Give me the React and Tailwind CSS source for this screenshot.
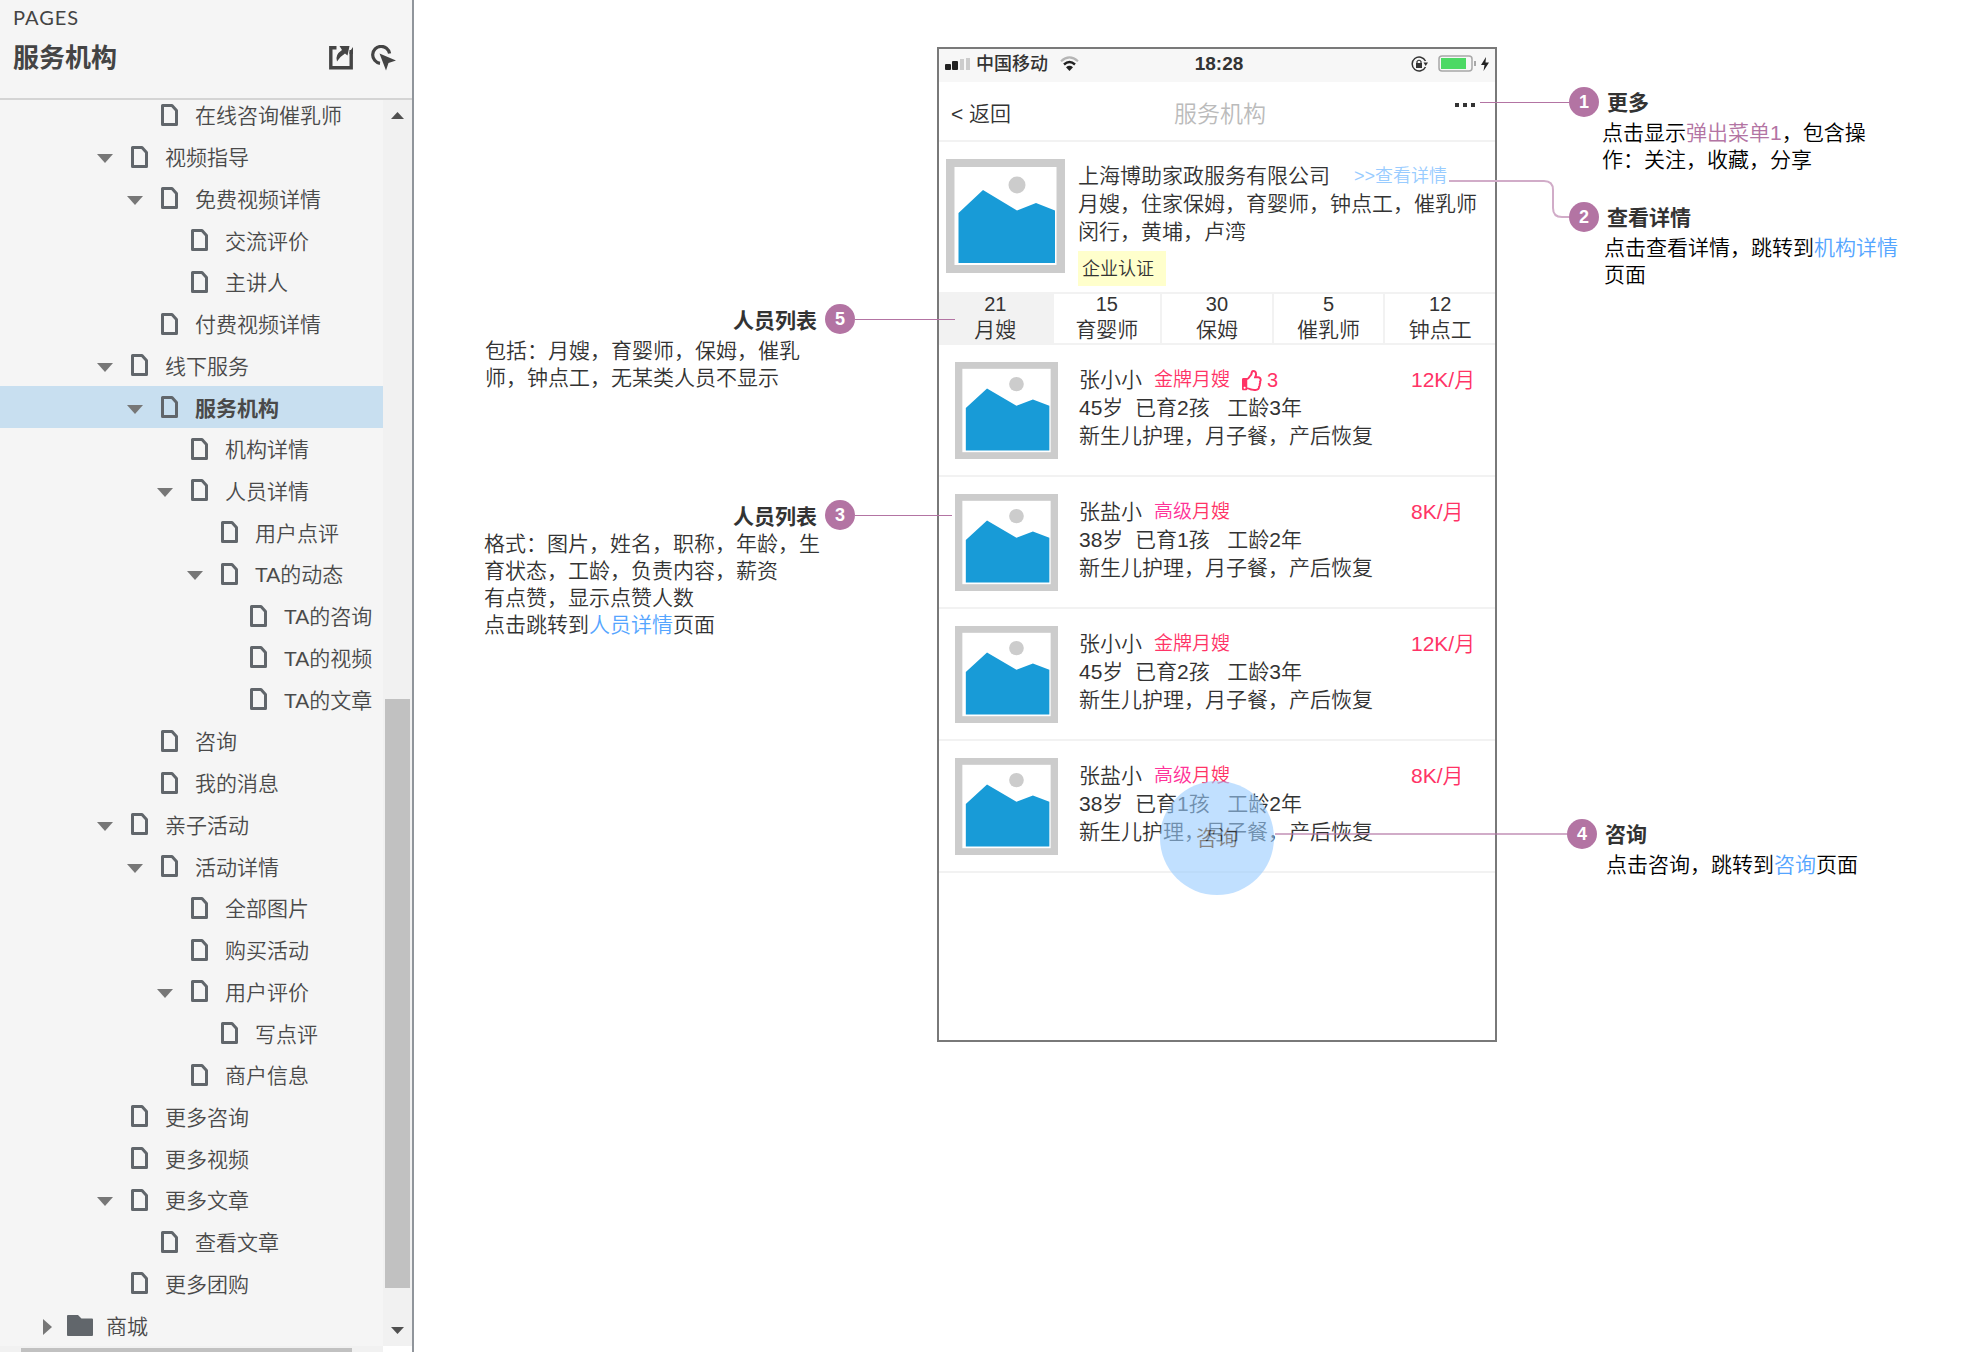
import React from 'react';
import {FaRegThumbsUp} from 'react-icons/fa';

const PAGES = [
    {label: '在线咨询催乳师', level: 3},
    {label: '视频指导', level: 2, open: true},
    {label: '免费视频详情', level: 3, open: true},
    {label: '交流评价', level: 4},
    {label: '主讲人', level: 4},
    {label: '付费视频详情', level: 3},
    {label: '线下服务', level: 2, open: true},
    {label: '服务机构', level: 3, open: true, selected: true},
    {label: '机构详情', level: 4},
    {label: '人员详情', level: 4, open: true},
    {label: '用户点评', level: 5},
    {label: 'TA的动态', level: 5, open: true},
    {label: 'TA的咨询', level: 6},
    {label: 'TA的视频', level: 6},
    {label: 'TA的文章', level: 6},
    {label: '咨询', level: 3},
    {label: '我的消息', level: 3},
    {label: '亲子活动', level: 2, open: true},
    {label: '活动详情', level: 3, open: true},
    {label: '全部图片', level: 4},
    {label: '购买活动', level: 4},
    {label: '用户评价', level: 4, open: true},
    {label: '写点评', level: 5},
    {label: '商户信息', level: 4},
    {label: '更多咨询', level: 2},
    {label: '更多视频', level: 2},
    {label: '更多文章', level: 2, open: true},
    {label: '查看文章', level: 3},
    {label: '更多团购', level: 2},
    {label: '商城', level: 0, folder: true},
];

const INDENT = {
    0: 'pl-[39px]',
    2: 'pl-[97px]',
    3: 'pl-[127px]',
    4: 'pl-[157px]',
    5: 'pl-[187px]',
    6: 'pl-[216px]',
};

const TABS = [
    {count: 21, label: '月嫂', active: true},
    {count: 15, label: '育婴师'},
    {count: 30, label: '保姆'},
    {count: 5, label: '催乳师'},
    {count: 12, label: '钟点工'},
];

const STAFF = [
    {name: '张小小', rank: '金牌', age: 45, kids: 2, years: 3, salary: '12K/月', likes: 3},
    {name: '张盐小', rank: '高级', age: 38, kids: 1, years: 2, salary: '8K/月'},
    {name: '张小小', rank: '金牌', age: 45, kids: 2, years: 3, salary: '12K/月'},
    {name: '张盐小', rank: '高级', age: 38, kids: 1, years: 2, salary: '8K/月'},
];

function PageIcon() {
    return (<svg className="w-[17px] h-[22px]" viewBox="0 0 17 22" fill="none">
        <path d="M1.5 1.5H11L15.5 6.5V20.5H1.5Z" stroke="#61666b" strokeWidth="3" strokeLinejoin="round"/>
    </svg>);
}

function FolderIcon() {
    return (<svg className="w-[26px] h-[21px]" viewBox="0 0 26 21">
        <path d="M1 0H11L14.500 3.500H25Q26 3.500 26 4.500V20Q26 21 25 21H1Q0 21 0 20V1Q0 0 1 0Z" fill="#61666b"/>
    </svg>);
}

function TreeRow({page}) {
    return (<li className={`flex min-h-0 flex-1 items-center ${INDENT[page.level]} ${page.selected ? 'bg-[#c8dff0]' : ''}`}>
        <span className={`flex shrink-0 pt-1 ${page.folder ? 'w-7 pl-1' : 'w-[34px]'}`}>
            {page.open && <svg className="w-4 h-[9px]" viewBox="0 0 16 9"><path d="M0 0H16L8 9Z" fill="#777"/></svg>}
            {page.folder && <svg className="w-[9px] h-4" viewBox="0 0 9 16"><path d="M0 0V16L9 8Z" fill="#777"/></svg>}
        </span>
        {page.folder ? <FolderIcon/> : <PageIcon/>}
        <a
            href="#"
            className={`whitespace-nowrap pt-0.5 text-[21px] leading-none text-[#4a4a4a] ${page.folder ? 'ml-[13px]' : 'ml-[17px]'} ${page.selected ? 'font-bold' : ''}`}
        >
            {page.label}
        </a>
    </li>);
}

function Sidebar() {
    return (<aside
        className="flex h-full w-[414px] shrink-0 flex-col border-r-2 border-[#90959b] bg-[#f5f5f5]">
        <header className="relative z-10 h-[100px] shrink-0 border-b-2 border-[#d4d4d4] bg-[#f5f5f5] pl-[13px] pr-4 pt-[5px] text-[#444]">
            <p className="font-['Lato',sans-serif] text-[20px] font-normal leading-6 tracking-wider">PAGES</p>
            <div className="mt-[11px] flex items-center">
                <h1 className="flex-1 text-[26px] font-bold leading-9">服务机构</h1>
                <button aria-label="Share" className="mr-[18px]">
                    <svg className="w-6 h-6" viewBox="0 0 24 24" fill="none">
                        <path d="M7.500 1.800H1.800V21.700H22.200V4" stroke="#444" strokeWidth="3.400"/>
                        <path d="M10.500 0H20.500L18.500 9.500L16 7.500Q11 10.500 8 15.500Q5.500 9 13 4Z" fill="#444"/>
                        <path d="M24 1L20.500 6V8H24Z" fill="#444"/>
                    </svg>
                </button>
                <button aria-label="Toggle hotspots">
                    <svg className="w-[25px] h-[26px]" viewBox="0 0 25 26" fill="none">
                        <path d="M9 18.300A8.500 8.500 0 1 1 18.600 8.500" stroke="#444" strokeWidth="3.200"/>
                        <path d="M8.500 8.500L25 15.500L17.500 18L15 25.500Z" fill="#444"/>
                    </svg>
                </button>
            </div>
        </header>
        <div className="flex min-h-0 flex-1">
            <div className="flex min-w-0 flex-1 flex-col">
                {/* list is scrolled a few pixels under the header */}
                <ul className="-mt-1.5 flex min-h-0 flex-1 flex-col">
                    {PAGES.map((page, i) => <TreeRow key={i} page={page}/>)}
                </ul>
                <div className="h-1.5 bg-[#f1f1f1] pl-[21px] pr-[31px] pt-0.5">
                    <div className="h-1 bg-[#c1c1c1]"/>
                </div>
            </div>
            <div className="flex w-[29px] flex-col items-center border-b-[6px] border-white bg-[#f1f1f1] pb-3 pt-3">
                <svg className="w-[13px] h-[7px]" viewBox="0 0 13 7"><path d="M0 7H13L6.500 0Z" fill="#505050"/></svg>
                <div className="grow-[580]"/>
                <div className="w-[25px] grow-[589] bg-[#c1c1c1]"/>
                <div className="grow-[39]"/>
                <svg className="w-[13px] h-[7px]" viewBox="0 0 13 7"><path d="M0 0H13L6.500 7Z" fill="#505050"/></svg>
            </div>
        </div>
    </aside>);
}

function Placeholder({className}) {
    return (<svg className={`shrink-0 ${className}`} viewBox="0 0 119 114" preserveAspectRatio="none">
        <rect width="119" height="114" fill="#ccc"/>
        <rect x="8.500" y="8" width="102" height="98" fill="#fff"/>
        <circle cx="71" cy="26" r="8.500" fill="#ccc"/>
        <path d="M12.500 54L37 31L71 51.500L90 44L109 51.500V104H12.500Z" fill="#189bd7"/>
    </svg>);
}

function StatusBar() {
    return (<div className="grid h-[33px] grid-cols-3 items-center bg-[#f7f7f7] pb-1 text-[#333]">
        <div className="flex items-center pl-1.5">
            <svg className="w-[25px] h-3" viewBox="0 0 25 12">
                <rect y="6" width="6" height="6" rx="1" fill="#222"/>
                <rect x="7" y="3" width="6" height="9" rx="1" fill="#222"/>
                <rect x="15" y="1" width="4" height="11" fill="#ccc"/>
                <rect x="21" width="4" height="12" fill="#ccc"/>
            </svg>
            <span className="ml-1.5 text-[18px] font-medium leading-6">中国移动</span>
            <svg className="ml-3 w-[19px] h-[15px]" viewBox="0 0 19 15" fill="none">
                <path d="M1 5.200Q9.500 -2.500 18 5.200" stroke="#b5b5b5" strokeWidth="2.200"/>
                <path d="M4 8.500Q9.500 3.500 15 8.500" stroke="#222" strokeWidth="2.400"/>
                <path d="M6 11.200Q9.500 8.400 13 11.200L9.500 15Z" fill="#222"/>
            </svg>
        </div>
        <span className="pl-1 text-center text-[19px] font-bold leading-6">18:28</span>
        <div className="flex items-center justify-end pr-1.5">
            <svg className="w-[17px] h-4" viewBox="0 0 17 16" fill="none">
                <path d="M14.500 5A7 7 0 1 0 14.500 11" stroke="#333" strokeWidth="1.500"/>
                <path d="M12.500 6.500H17L14.700 10Z" fill="#333"/>
                <rect x="5" y="7" width="6" height="5" fill="#333"/>
                <path d="M6 7.500V5.500Q8 3 10 5.500V7.500" stroke="#333" strokeWidth="1.200"/>
            </svg>
            <svg className="ml-2.5 w-[39px] h-[17px]" viewBox="0 0 39 17" fill="none">
                <rect x="1" y="1" width="33" height="15" rx="3" stroke="#a8a8a8" strokeWidth="1.500"/>
                <rect x="3" y="3" width="25" height="11" fill="#4cd964"/>
                <path d="M37 6V11" stroke="#a8a8a8" strokeWidth="2"/>
            </svg>
            <svg className="ml-1 w-2 h-3.5" viewBox="0 0 8 14">
                <path d="M5 0L0 8H3.500L2.500 14L8 5.500H4.500Z" fill="#222"/>
            </svg>
        </div>
    </div>);
}

function StaffRow({person}) {
    return (<li className="flex h-[132px] border-b-2 border-[#f2f2f2] pl-4 pt-[17px]">
        <Placeholder className="w-[103px] h-[97px]"/>
        <div className="ml-[21px] flex-1 whitespace-pre pt-1 text-[21px] leading-7">
            <div className="flex items-center">
                <span>{person.name}</span>
                <span className={`ml-3 text-[19px] ${person.rank === '高级' ? 'text-[#ff3399]' : 'text-[#ff3366]'}`}>{person.rank}</span>
                <span className="text-[19px] text-[#ff3366]">月嫂</span>
                {person.likes && <button className="ml-3 flex items-center gap-1 text-[20px] text-[#ff3366]">
                    <FaRegThumbsUp className="size-[21px]"/>
                    {person.likes}
                </button>}
            </div>
            <p>{`${person.age}岁  已育${person.kids}孩   工龄${person.years}年`}</p>
            <p>新生儿护理，月子餐，产后恢复</p>
        </div>
        <span className="w-[84px] pt-1 text-[21px] leading-7 text-[#ff3366]">{person.salary}</span>
    </li>);
}

function Phone() {
    return (<section className="relative mt-[47px] h-[995px] border-2 border-[#797979] bg-white text-[#333]">
        <StatusBar/>
        <div className="grid h-[60px] grid-cols-3 items-center border-b-2 border-[#f2f2f2] pt-1.5">
            <button className="pl-3 text-left text-[21px] leading-7">&lt; 返回</button>
            <h2 className="pl-1.5 text-center text-[23px] leading-7 text-[#bbb]">服务机构</h2>
            <button aria-label="更多" className="flex justify-end gap-1 self-start pr-5 pt-[15px]">
                <i className="size-1 bg-[#333]"/>
                <i className="size-1 bg-[#333]"/>
                <i className="size-1 bg-[#333]"/>
            </button>
        </div>
        <div className="flex h-[150px] pl-[7px] pt-[17px]">
            <Placeholder className="w-[119px] h-[114px]"/>
            <div className="ml-[13px] whitespace-nowrap pt-[3px] text-[21px] leading-7">
                <div className="flex items-center">
                    <span>上海博助家政服务有限公司</span>
                    <a href="#" className="ml-6 text-[18px] text-[#99ccff]">&gt;&gt;查看详情</a>
                </div>
                <p>月嫂，住家保姆，育婴师，钟点工，催乳师</p>
                <p>闵行，黄埔，卢湾</p>
                <span className="mt-[5px] flex h-[35px] w-[88px] items-center bg-[#ffffcc] pl-1 text-[18px]">企业认证</span>
            </div>
        </div>
        <div className="grid h-[53px] grid-cols-[115fr_109fr_112fr_112fr_110fr] grid-rows-[minmax(0,1fr)] border-y-2 border-[#f2f2f2]">
            {TABS.map((tab) => (<button
                key={tab.label}
                className={`flex flex-col items-center justify-end border-r-2 border-[#f2f2f2] text-[21px] leading-[26px] last:border-r-0 ${tab.active ? 'bg-[#f2f2f2]' : ''}`}
            >
                <span className="text-[20px]">{tab.count}</span>
                <span>{tab.label}</span>
            </button>))}
        </div>
        <ul>
            {STAFF.map((person, i) => <StaffRow key={i} person={person}/>)}
        </ul>
        <button
            className="absolute left-1/2 top-[732px] size-[114px] -translate-x-1/2 rounded-full bg-[#99ccff] text-[21px] opacity-60">
            咨询
        </button>
    </section>);
}

function Badge({children}) {
    return (<span
        className="flex size-[30px] shrink-0 items-center justify-center rounded-full bg-[#b374a3] text-[18px] font-bold text-white">
        {children}
    </span>);
}

/** Note on the left of the phone, with its pointer running right into it. */
function LeftNote({number, title, line, width, children}) {
    return (<div className="flex flex-col items-end">
        <div className={`relative z-10 flex items-center ${line}`}>
            <h3 className="mr-2 pt-1 text-[21px] font-bold leading-[26px] text-[#333]">{title}</h3>
            <Badge>{number}</Badge>
            <i className="h-px flex-1 bg-[#b374a3]"/>
        </div>
        <div className={`text-[21px] leading-[27px] text-[#333] ${width}`}>{children}</div>
    </div>);
}

/** Note on the right of the phone; the pointer is passed in, as its shape differs. */
function RightNote({number, title, pointer, width, children}) {
    return (<div>
        <div className="relative z-10 flex items-center">
            {pointer}
            <Badge>{number}</Badge>
            <h3 className="ml-2 pt-0.5 text-[21px] font-bold leading-[28px] text-[#333]">{title}</h3>
        </div>
        <div className={`mt-0.5 text-[21px] leading-[27px] text-black ${width}`}>{children}</div>
    </div>);
}

export default function App() {
    return (<div
        lang="zh-CN"
        className="flex h-screen overflow-hidden bg-white font-['Liberation_Sans','Noto_Sans_CJK_SC',sans-serif] font-[350]">
        <Sidebar/>
        <main className="grid flex-1 grid-cols-[minmax(0,523fr)_560px_minmax(0,465fr)] items-start">
            <div className="flex flex-col gap-[109px] pt-[304px]">
                <LeftNote number={5} title="人员列表" line="w-[222px] -mr-[18px]" width="mr-[122px] mt-[3px] w-[330px]">
                    <p>包括：月嫂，育婴师，保姆，催乳师，钟点工，无某类人员不显示</p>
                </LeftNote>
                <LeftNote number={3} title="人员列表" line="w-[219px] -mr-[15px]" width="mr-[114px] w-[339px]">
                    <p>格式：图片，姓名，职称，年龄，生育状态，工龄，负责内容，薪资</p>
                    <p>有点赞，显示点赞人数</p>
                    <p>点击跳转到<a href="#" className="text-[#55a5ff]">人员详情</a>页面</p>
                </LeftNote>
            </div>
            <Phone/>
            <div className="pt-[87px]">
                <RightNote
                    number={1}
                    title="更多"
                    pointer={<i className="-ml-[17px] h-px w-[89px] bg-[#b374a3]"/>}
                    width="ml-[105px] w-[280px]"
                >
                    点击显示<a href="#" className="text-[#b374a3]">弹出菜单1</a>，包含操作：关注，收藏，分享
                </RightNote>
                <div className="h-[29px]"/>
                <RightNote
                    number={2}
                    title="查看详情"
                    pointer={<>
                        <svg className="absolute -left-12 bottom-3.5 w-[120px] h-[38px]" viewBox="0 0 120 38" fill="none">
                            <path d="M0 1H95Q104 1 104 10V28Q104 37 113 37H120" stroke="#d1acc8" strokeWidth="2"/>
                        </svg>
                        <span className="w-[72px]"/>
                    </>}
                    width="ml-[107px] w-[300px]"
                >
                    点击查看详情，跳转到<a href="#" className="text-[#55a5ff]">机构详情</a>页面
                </RightNote>
                <div className="h-[531px]"/>
                <RightNote
                    number={4}
                    title="咨询"
                    pointer={<i className="-ml-[222px] h-0.5 w-[292px] bg-[#b374a3] opacity-60"/>}
                    width="ml-[109px] w-[300px]"
                >
                    点击咨询，跳转到<a href="#" className="text-[#55a5ff]">咨询</a>页面
                </RightNote>
            </div>
        </main>
    </div>);
}
